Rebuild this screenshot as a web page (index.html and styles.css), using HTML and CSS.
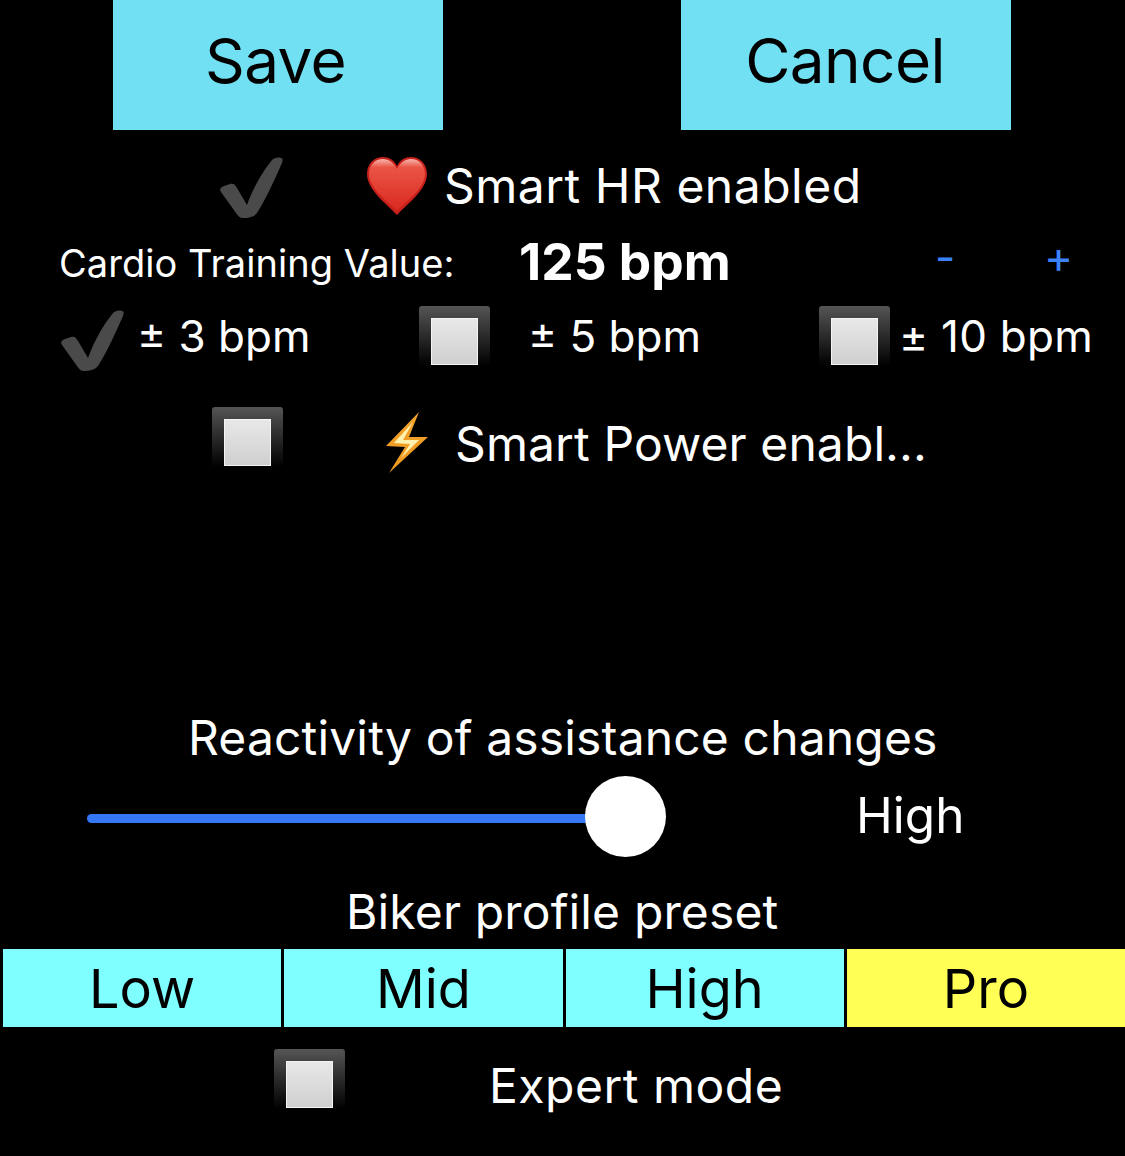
FILE: index.html
```html
<!DOCTYPE html>
<html lang="en">
<head>
    <meta charset="UTF-8">
    <meta name="viewport" content="width=device-width, initial-scale=1.0">
    <title>Assistance settings</title>
    <link rel="stylesheet" href="styles.css">
</head>
<body>
    <div class="screen">
        <div class="actions">
            <button class="action-btn action-save">Save</button>
            <button class="action-btn action-cancel">Cancel</button>
        </div>

        <div class="row row-hr">
            <svg class="check" viewBox="0 0 64 62"><path d="M1 36C-1 33 1 31 4 30L10 28C13 27 15 28 17 32L27 49C33 32 43 15 52 4C54 2 58 1 61 2C63 2 63 4 62 7C54 25 46 43 37 57C34 61 28 62 23 62C20 62 18 60 16 57Z"/></svg>
            <svg class="heart" viewBox="0 0 60 58">
                <defs>
                    <linearGradient id="heartFill" x1="0" y1="0" x2="0" y2="1">
                        <stop offset="0" stop-color="#f6b5aa"/>
                        <stop offset="0.16" stop-color="#ea5546"/>
                        <stop offset="1" stop-color="#d9281f"/>
                    </linearGradient>
                </defs>
                <path fill="#c8201a" d="M30 58C20 47 0 33 0 17C0 7 7 0 16 0C22 0 27 3 30 9C33 3 38 0 44 0C53 0 60 7 60 17C60 33 40 47 30 58Z"/>
                <path fill="url(#heartFill)" d="M30 54C20 44 2 31 2 17C2 8 8 2 16 2C22 2 27 6 30 12C33 6 38 2 44 2C52 2 58 8 58 17C58 31 40 44 30 54Z"/>
            </svg>
            <span class="label-lg label-hr">Smart HR enabled</span>
        </div>

        <div class="row row-cardio">
            <span class="cardio-label">Cardio Training Value:</span>
            <span class="cardio-value">125 bpm</span>
            <span class="stepper stepper-minus">-</span>
            <span class="stepper stepper-plus">+</span>
        </div>

        <div class="row row-range">
            <svg class="check check-range" viewBox="0 0 64 62"><path d="M1 36C-1 33 1 31 4 30L10 28C13 27 15 28 17 32L27 49C33 32 43 15 52 4C54 2 58 1 61 2C63 2 63 4 62 7C54 25 46 43 37 57C34 61 28 62 23 62C20 62 18 60 16 57Z"/></svg>
            <span class="range-text range-3">± 3 bpm</span>
            <span class="box"><span class="box-inner"></span></span>
            <span class="range-text range-5">± 5 bpm</span>
            <span class="box"><span class="box-inner"></span></span>
            <span class="range-text range-10">± 10 bpm</span>
        </div>

        <div class="row row-power">
            <span class="box box-raised"><span class="box-inner"></span></span>
            <svg class="bolt" viewBox="0 0 44 62">
                <defs>
                    <linearGradient id="boltFill" x1="0" y1="0" x2="0" y2="1">
                        <stop offset="0" stop-color="#f2a32c"/>
                        <stop offset="1" stop-color="#ef9a20"/>
                    </linearGradient>
                </defs>
                <polygon fill="url(#boltFill)" points="33,0 0,34 19,35 3,61 42,25 23,25"/>
                <polygon fill="#fff3b0" points="27,10 8,31 24,32 15,46 33,28 17,28"/>
            </svg>
            <span class="label-lg label-power">Smart Power enabl...</span>
        </div>

        <div class="reactivity-title">Reactivity of assistance changes</div>
        <div class="row row-slider">
            <div class="slider">
                <div class="slider-track"></div>
                <div class="slider-knob"></div>
            </div>
            <span class="slider-value">High</span>
        </div>

        <div class="preset-title">Biker profile preset</div>
        <div class="presets">
            <div class="preset">Low</div>
            <div class="preset">Mid</div>
            <div class="preset">High</div>
            <div class="preset preset-active">Pro</div>
        </div>

        <div class="row row-expert">
            <span class="box box-raised"><span class="box-inner"></span></span>
            <span class="label-lg">Expert mode</span>
        </div>
    </div>
</body>
</html>
```
FILE: styles.css
```css
* {
    box-sizing: border-box;
}
html, body {
    margin: 0;
    padding: 0;
    background-color: #000;
}
.screen {
    width: 1125px;
    height: 1156px;
    overflow: hidden;
    color: #fff;
    font-family: Inter, "Liberation Sans", sans-serif;
    white-space: nowrap;
}
.actions {
    display: flex;
    gap: 238px;
    padding-left: 113px;
}
.action-btn {
    width: 330px;
    height: 130px;
    border: none;
    padding-top: 0;
    padding-bottom: 10px;
    background-color: #70e0f2;
    color: #000;
    font-family: inherit;
    font-size: 62px;
    letter-spacing: -0.6px;
}
.action-save {
    padding-left: 0;
    padding-right: 5px;
}
.action-cancel {
    padding-left: 0;
    padding-right: 2px;
}
.row {
    display: flex;
    align-items: center;
}
.label-lg {
    font-size: 48px;
    letter-spacing: 0.15px;
}
.check {
    width: 64px;
    height: 62px;
    flex: none;
    fill: #4a4a4a;
}
.box {
    width: 71px;
    height: 60px;
    flex: none;
    display: flex;
    justify-content: center;
    padding-top: 12px;
    border-radius: 3px 3px 0 0;
    background: linear-gradient(#555, #000);
}
.box-raised {
    margin-bottom: 12px;
}
.box-inner {
    width: 47px;
    height: 47px;
    border: 1px solid #f4f4f4;
    background: linear-gradient(#e8e8e8, #cfcfcf);
}

.row-hr {
    height: 60px;
    margin-top: 26px;
    padding-left: 220px;
}
.row-hr .check {
    margin-top: 2px;
}
.heart {
    width: 60px;
    height: 58px;
    margin-left: 83px;
    margin-right: 17px;
}
.label-hr {
    margin-bottom: 2px;
    letter-spacing: 0.5px;
}
.row-cardio {
    height: 50px;
    margin-top: 20px;
    padding-left: 59px;
}
.cardio-label {
    width: 460px;
    margin-top: 4px;
    font-size: 38px;
    letter-spacing: 0.05px;
}
.cardio-value {
    width: 416px;
    font-size: 51.5px;
    font-weight: 700;
}
.stepper {
    margin-bottom: 8px;
    color: #3b82f6;
    font-size: 44px;
}
.stepper-minus {
    width: 109px;
}
.row-range {
    height: 66px;
    margin-top: 17px;
    padding-left: 61px;
}
.check-range {
    margin-top: 8px;
}
.range-text {
    font-size: 44px;
}
.range-3 {
    margin-left: 12px;
    width: 282px;
}
.range-5 {
    margin-left: 38px;
    width: 291px;
}
.range-10 {
    margin-left: 9px;
    letter-spacing: 0.25px;
}
.row-power {
    height: 70px;
    margin-top: 39px;
    padding-left: 212px;
}
.bolt {
    width: 44px;
    height: 62px;
    margin-left: 103px;
    margin-right: 25px;
}
.label-power {
    letter-spacing: 0.1px;
}
.reactivity-title {
    margin-top: 230px;
    height: 60px;
    line-height: 60px;
    font-size: 48px;
    letter-spacing: 0.15px;
    padding-left: 188px;
}
.row-slider {
    height: 82px;
    margin-top: 8px;
    padding-left: 87px;
}
.slider {
    position: relative;
    width: 769px;
    height: 82px;
}
.slider-track {
    position: absolute;
    left: 0;
    top: 38px;
    width: 510px;
    height: 9px;
    border-radius: 5px;
    background-color: #3478f6;
}
.slider-knob {
    position: absolute;
    left: 498px;
    top: 0;
    width: 81px;
    height: 81px;
    border-radius: 50%;
    background-color: #fff;
}
.slider-value {
    margin-bottom: 4px;
    font-size: 49.5px;
}
.preset-title {
    margin-top: 29px;
    height: 50px;
    line-height: 50px;
    font-size: 48px;
    letter-spacing: 0.15px;
    padding-left: 346px;
}
.presets {
    display: grid;
    grid-template-columns: repeat(4, 1fr);
    gap: 3px;
    height: 78px;
    margin-top: 12px;
    padding-left: 3px;
}
.preset {
    display: flex;
    align-items: center;
    justify-content: center;
    background-color: #7fffff;
    color: #000;
    font-size: 54px;
}
.preset-active {
    background-color: #ffff55;
}
.row-expert {
    height: 70px;
    margin-top: 23px;
    padding-left: 274px;
}
.row-expert .label-lg {
    margin-left: 144px;
    letter-spacing: 0.5px;
}
```
